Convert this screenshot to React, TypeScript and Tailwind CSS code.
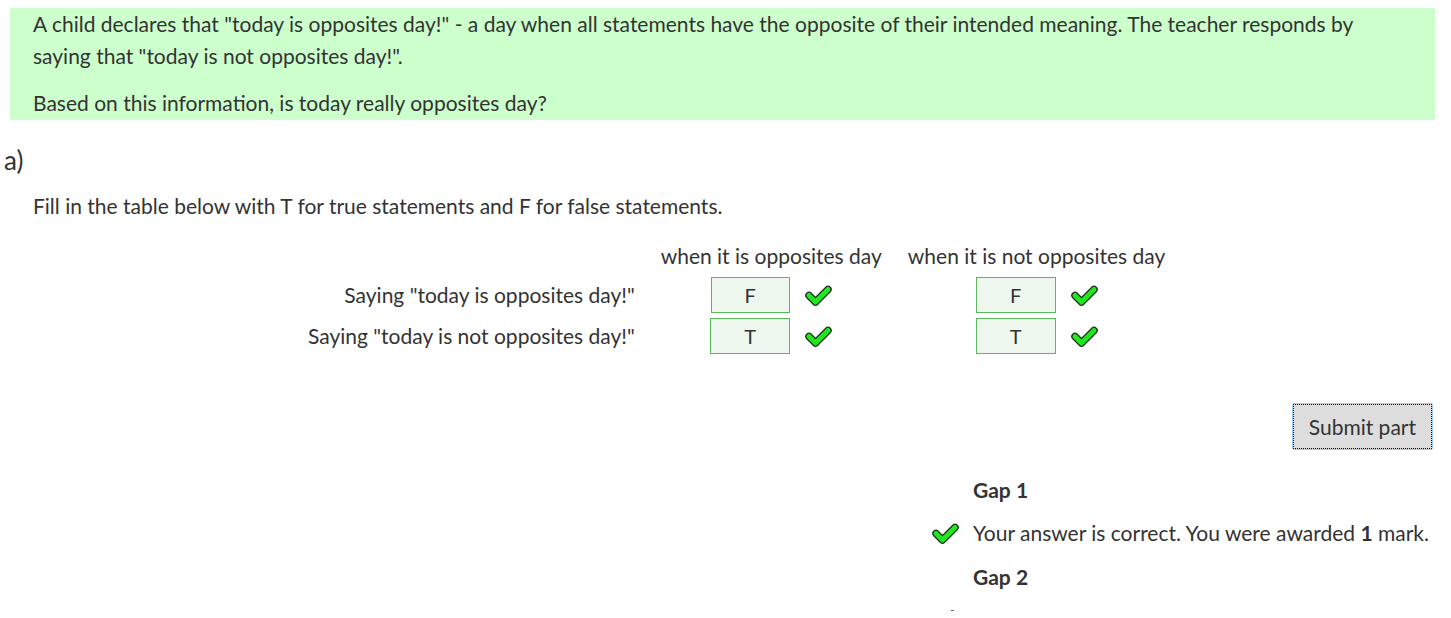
import React from 'react';

const FONT = "font-['Lato','Noto_Sans',sans-serif]";

function Tick({ className = '' }: { className?: string }) {
  return (
    <svg viewBox="0 0 27 21" width="27" height="21" className={className}>
      <path d="M4 10.5 L10.5 17 L23 4.5" fill="none" stroke="#1c301c" strokeWidth="7.5" strokeLinecap="round" strokeLinejoin="round" />
      <path d="M4 10.5 L10.5 17 L23 4.5" fill="none" stroke="#1fe81f" strokeWidth="5" strokeLinecap="round" strokeLinejoin="round" />
    </svg>
  );
}

function Answer({ value, wide = false }: { value: string; wide?: boolean }) {
  return (
    <div className="flex items-center justify-center gap-[15px]">
      <div
        className={`${wide ? 'w-[80px]' : 'w-[79px]'} h-[36px] border border-[#5cb85c] bg-[#edf7ed] flex items-center justify-center text-[20px] text-[#333]`}
      >
        {value}
      </div>
      <Tick />
    </div>
  );
}

export default function App() {
  return (
    <div className={`${FONT} text-[21px] leading-[32px] text-[#333] bg-white min-h-[618px] pt-[8px]`}>
      <div className="ml-[10px] w-[1425px] bg-[#ccffcc] pl-[23px] pr-[20px] pb-[1px]">
        <p>
          A child declares that "today is opposites day!" - a day when all statements have the opposite of their
          intended meaning. The teacher responds by saying that "today is not opposites day!".
        </p>
        <p className="mt-[15px]">Based on this information, is today really opposites day?</p>
      </div>

      <div className="pl-[4px] mt-[24px] text-[26px] leading-[32px]">a)</div>

      <div className="pl-[33px] mt-[14px]">
        <p>Fill in the table below with T for true statements and F for false statements.</p>

        <table className="mt-[13px] ml-[249px] border-separate border-spacing-x-[26px] border-spacing-y-[5px]">
          <thead>
            <tr>
              <th></th>
              <th className="font-normal">when it is opposites day</th>
              <th className="font-normal">when it is not opposites day</th>
            </tr>
          </thead>
          <tbody>
            <tr>
              <td className="text-right">Saying "today is opposites day!"</td>
              <td><Answer value="F" /></td>
              <td><Answer value="F" wide /></td>
            </tr>
            <tr>
              <td className="text-right">Saying "today is not opposites day!"</td>
              <td><Answer value="T" wide /></td>
              <td><Answer value="T" wide /></td>
            </tr>
          </tbody>
        </table>
      </div>

      <div className="flex justify-end pr-[18px] mt-[44px]">
        <button className="h-[47px] px-[16px] bg-[#dddddd] border border-[#9ecdf0] outline-1 outline-dotted outline-black -outline-offset-2 rounded-[2px] text-[#333]">
          Submit part
        </button>
      </div>

      <div className="ml-[932px] mt-[24px]">
        <div className="pl-[41px] font-bold">Gap 1</div>
        <div className="flex items-center gap-[14px] mt-[11px]">
          <Tick />
          <span>
            Your answer is correct. You were awarded <b>1</b> mark.
          </span>
        </div>
        <div className="pl-[41px] font-bold mt-[12px]">Gap 2</div>
        <div className="ml-[19px] mt-[17px] w-[3px] h-[1px] bg-[#666]"></div>
      </div>
    </div>
  );
}
